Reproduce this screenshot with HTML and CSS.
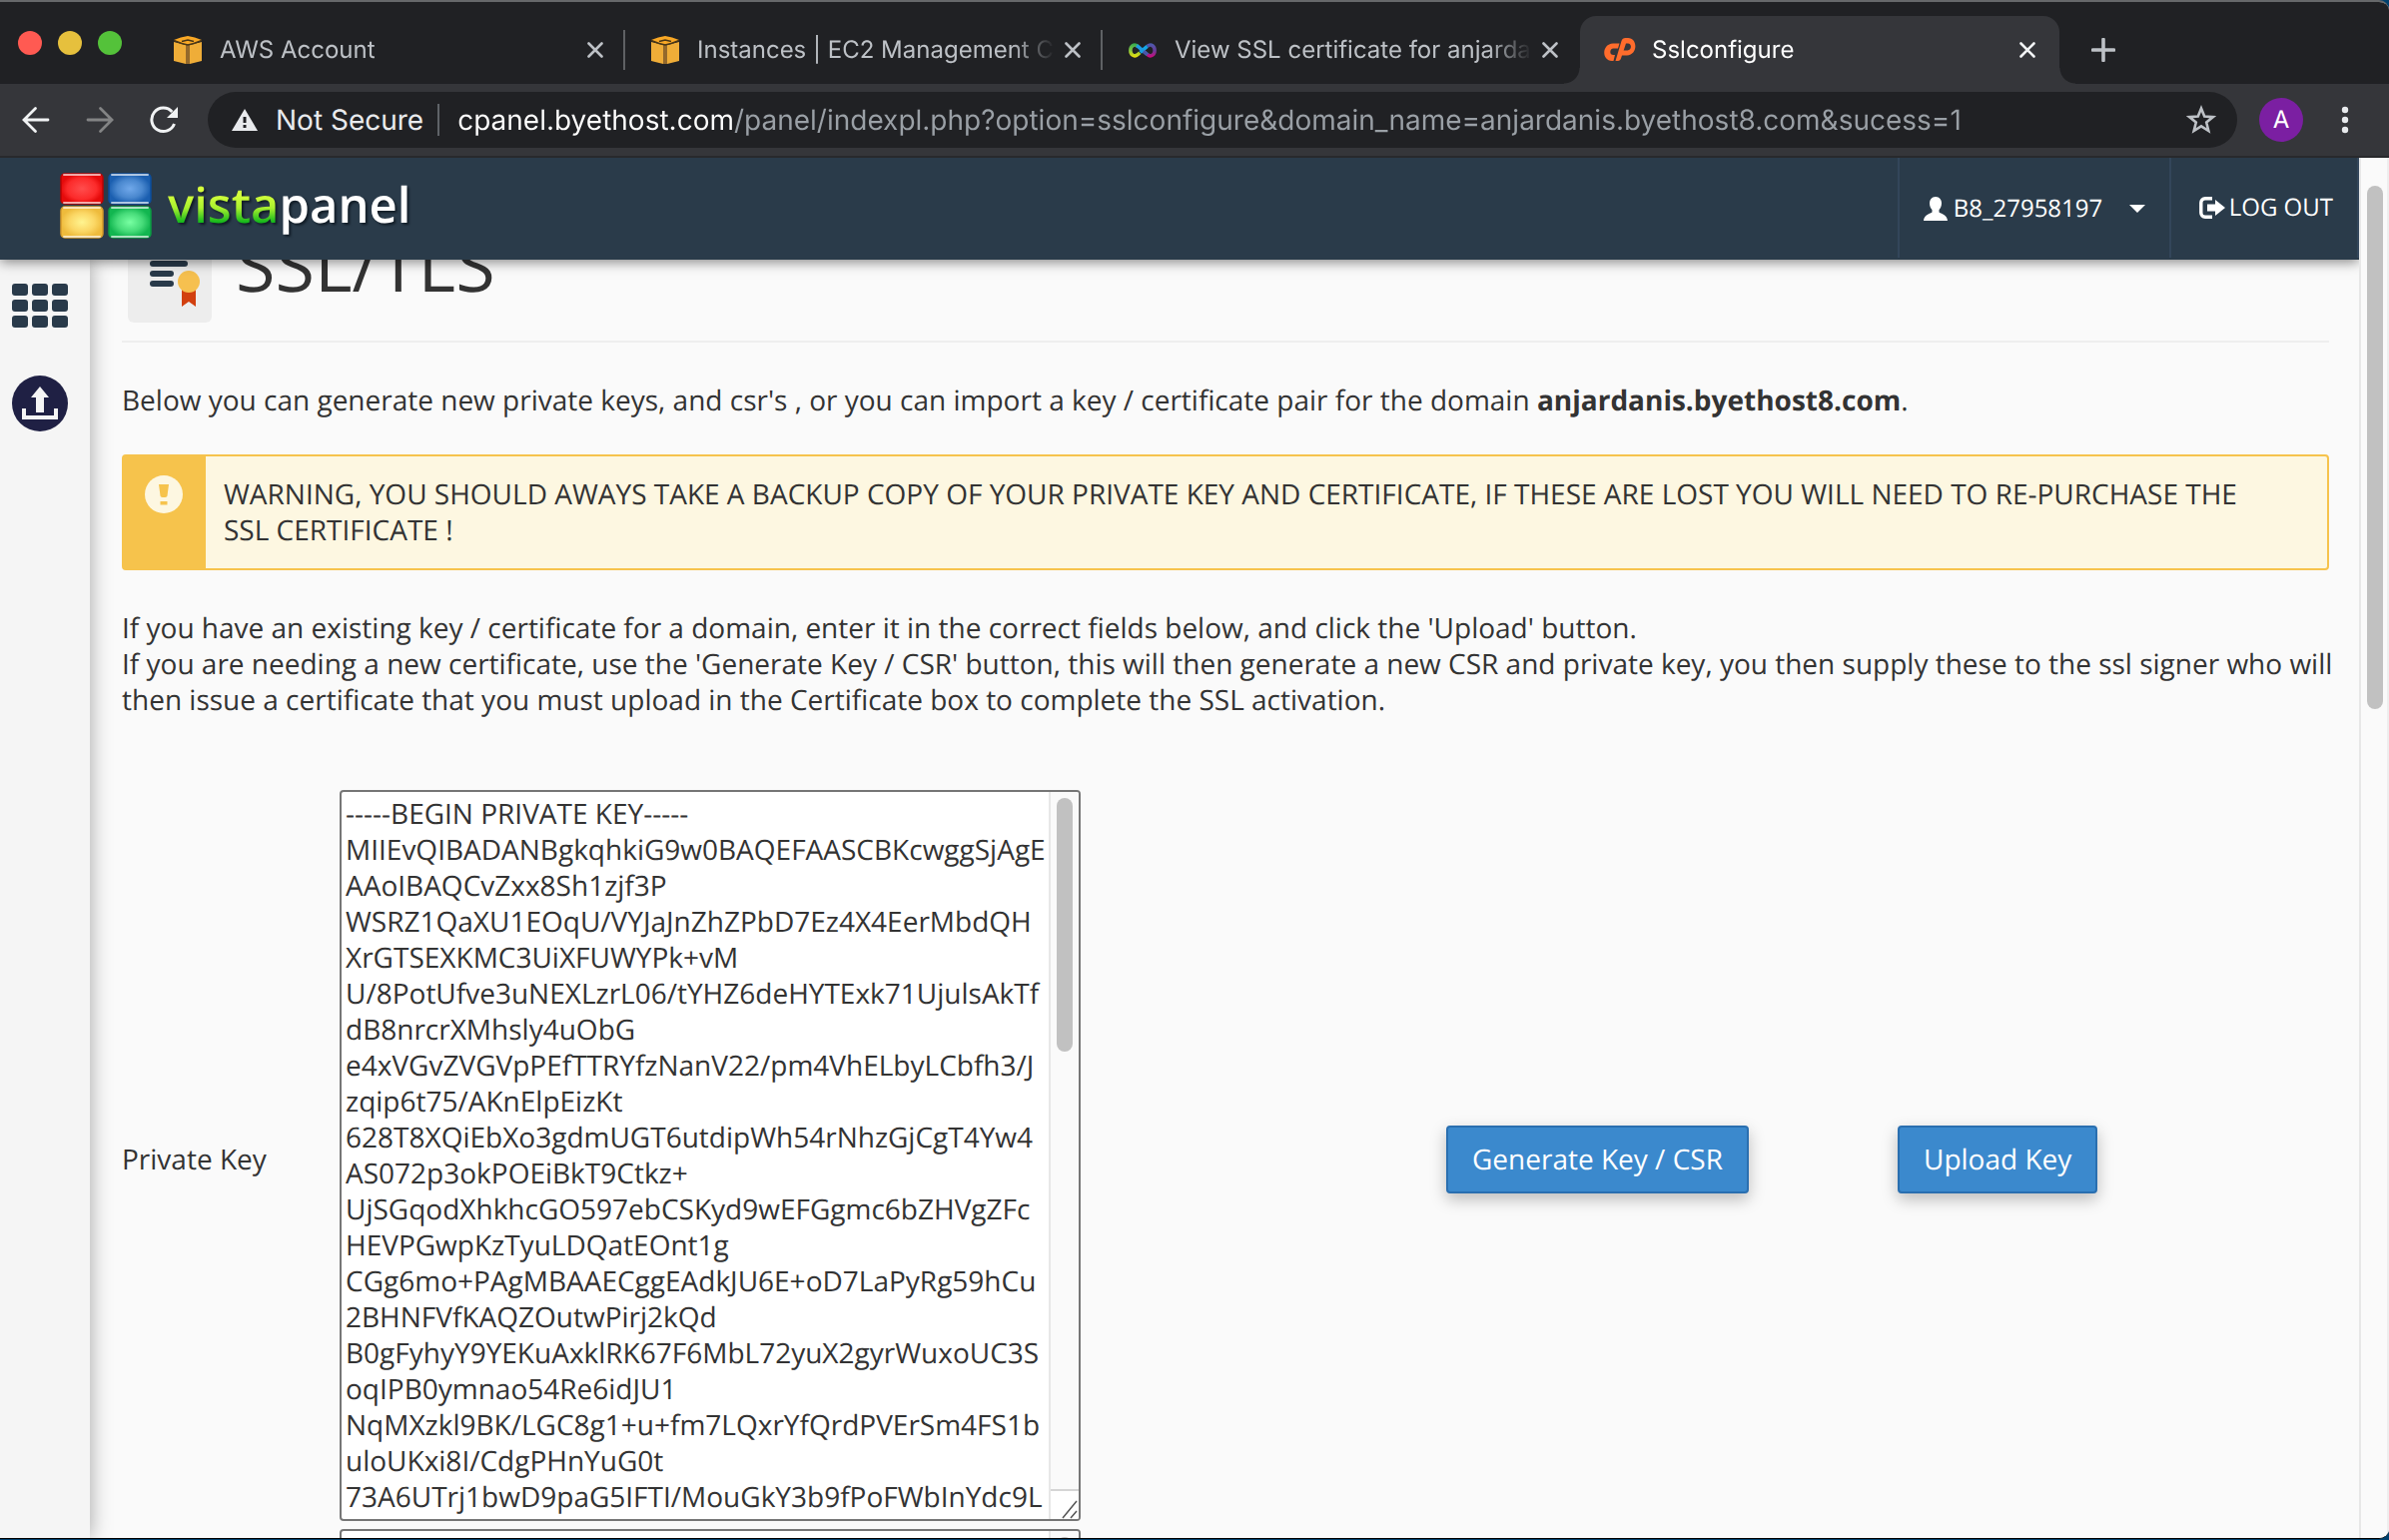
FILE: index.html
```html
<!DOCTYPE html>
<html lang="en">
<head>
<meta charset="utf-8">
<title>Sslconfigure</title>
<link rel="stylesheet" href="styles.css">
</head>
<body>
<svg class="defs" aria-hidden="true">
  <defs>
    <symbol id="aws" viewBox="0 0 28 28">
      <path d="M7 1.500 14 0l7 1.500L28 4l-7 3.500-7 1.500-7-1.500L0 4z" fill="#f9a825"/>
      <path d="M0 6l12 3v19L0 25zM28 6L16 9v19l12-3z" fill="#efad38"/>
      <path d="M12 9h4v19h-4z" fill="#94692b"/>
      <path d="M0 4.500l8 3 6 1.500 6-1.500 8-3M8 5.500l6-1.500 6 1.500" fill="none" stroke="#4a3717" stroke-width="1.500"/>
    </symbol>
    <symbol id="close" viewBox="0 0 16 16">
      <path d="M1.500 1.500l13 13M14.500 1.500l-13 13" stroke="currentColor" stroke-width="2.600" stroke-linecap="round"/>
    </symbol>
  </defs>
</svg>

<div class="tabstrip">
  <div class="lights"><span class="light red"></span><span class="light yellow"></span><span class="light green"></span></div>
  <div class="tab">
    <svg class="favicon"><use href="#aws"/></svg>
    <a class="tab-title" href="#">AWS Account</a>
    <button class="icon-btn" aria-label="Close tab"><svg class="x"><use href="#close"/></svg></button>
  </div>
  <div class="tab">
    <svg class="favicon"><use href="#aws"/></svg>
    <a class="tab-title" href="#">Instances | EC2 Management C</a>
    <button class="icon-btn" aria-label="Close tab"><svg class="x"><use href="#close"/></svg></button>
  </div>
  <div class="tab last">
    <svg class="favicon" viewBox="0 0 30 30" fill="none" stroke-width="3.800">
      <defs>
        <linearGradient id="loopA" gradientUnits="userSpaceOnUse" x1="0" y1="8" x2="0" y2="24"><stop offset="0" stop-color="#2fa84f"/><stop offset=".5" stop-color="#8cc63f"/><stop offset="1" stop-color="#ffe600"/></linearGradient>
        <linearGradient id="loopB" gradientUnits="userSpaceOnUse" x1="0" y1="8" x2="0" y2="24"><stop offset="0" stop-color="#4a5cb0"/><stop offset=".5" stop-color="#6b3a96"/><stop offset="1" stop-color="#e0007a"/></linearGradient>
      </defs>
      <path d="M10 11.200C5.500 7.500 2 11.500 2 15.500s3.500 8 8 4.300l2-1.800" stroke="url(#loopA)"/>
      <path d="M20 11.200c4.500-3.700 8 .3 8 4.300s-3.500 8-8 4.300" stroke="url(#loopB)"/>
      <path d="M12.500 17.500L20 11.200" stroke="#14a5e6"/>
      <path d="M8.500 10.400l1.500.8L20 19.800" stroke="#1e9be0"/>
      <path d="M16 16.400l4 3.400" stroke="#4a55a8"/>
    </svg>
    <a class="tab-title" href="#">View SSL certificate for anjarda</a>
    <button class="icon-btn" aria-label="Close tab"><svg class="x"><use href="#close"/></svg></button>
  </div>
  <div class="tab active">
    <svg class="favicon cp" viewBox="0 0 32 24" fill="#ff6c2c">
      <path d="M9 5.500h6.500l-1.500 5H9.500c-4 0-4.500 6.500 0 6.500h1.500L9.500 23H8C-3 22-2 6 9 5.500z"/>
      <path d="M11.500 23L17.500 3c.6-2 2-3 4-3H24c10 0 10 17-1 17.500h-5l1.500-5h4c4.500 0 4.500-7 .5-7h-2L17 20.500c-.5 1.500-1.500 2.500-3 2.500z"/>
    </svg>
    <a class="tab-title" href="#">Sslconfigure</a>
    <button class="icon-btn" aria-label="Close tab"><svg class="x"><use href="#close"/></svg></button>
  </div>
  <button class="icon-btn new-tab" aria-label="New tab"><svg viewBox="0 0 24 24"><path d="M12 1.500v21M1.500 12h21" stroke="#bdc1c6" stroke-width="3.600" stroke-linecap="round"/></svg></button>
</div>

<div class="toolbar">
  <button class="icon-btn nav-btn" aria-label="Back"><svg viewBox="0 0 28 28"><path d="M26 14H2.500M13.500 2.500L2 14l11.500 11.500" fill="none" stroke="#f1f3f4" stroke-width="2.800" stroke-linecap="round"/></svg></button>
  <button class="icon-btn nav-btn" aria-label="Forward"><svg viewBox="0 0 28 28"><path d="M2 14h23.500M14.500 2.500L26 14 14.500 25.500" fill="none" stroke="#838485" stroke-width="2.800" stroke-linecap="round"/></svg></button>
  <button class="icon-btn nav-btn" aria-label="Reload"><svg viewBox="0 0 28 28"><path d="M24.500 18A11.700 11.700 0 1 1 22.300 6" fill="none" stroke="#f1f3f4" stroke-width="3"/><path d="M28 1v11H17z" fill="#f1f3f4"/></svg></button>
  <div class="omnibox">
    <svg class="warn" viewBox="0 0 26 22"><path d="M13 0l13 22H0z" fill="#e8eaed"/><path d="M11.500 8h3v6h-3zM11.500 16h3v3h-3z" fill="#202124"/></svg>
    <label class="secure" for="url">Not Secure</label>
    <span class="rule"></span>
    <input id="url" class="url" type="text" value="cpanel.byethost.com/panel/indexpl.php?option=sslconfigure&amp;domain_name=anjardanis.byethost8.com&amp;sucess=1">
    <button class="icon-btn" aria-label="Bookmark"><svg class="star" viewBox="0 0 30 30"><path d="M15 3.500l3.200 8 8.600.6-6.600 5.500 2.100 8.400-7.300-4.600-7.300 4.600 2.100-8.400-6.600-5.500 8.600-.6z" fill="none" stroke="#bdc1c6" stroke-width="2.600"/></svg></button>
  </div>
  <button class="avatar">A</button>
  <button class="icon-btn" aria-label="Menu"><svg class="dots" viewBox="0 0 8 28" fill="#e8eaed"><circle cx="4" cy="4" r="3.200"/><circle cx="4" cy="14" r="3.200"/><circle cx="4" cy="24" r="3.200"/></svg></button>
</div>

<div class="viewport">
  <div class="page">
    <header class="topbar">
      <a class="brand" href="#">
        <svg class="logo" viewBox="0 0 92 68">
          <defs>
            <radialGradient id="r"><stop offset="0" stop-color="#ff4d4d"/><stop offset=".7" stop-color="#fc2b2b"/><stop offset="1" stop-color="#e50b0b"/></radialGradient>
            <radialGradient id="b"><stop offset="0" stop-color="#70a8ea"/><stop offset=".6" stop-color="#4a88cf"/><stop offset="1" stop-color="#1b5fb0"/></radialGradient>
            <radialGradient id="y"><stop offset="0" stop-color="#fff490"/><stop offset=".6" stop-color="#fbd765"/><stop offset="1" stop-color="#eebb3c"/></radialGradient>
            <radialGradient id="g"><stop offset="0" stop-color="#78ffa2"/><stop offset=".6" stop-color="#47dc7a"/><stop offset="1" stop-color="#12b650"/></radialGradient>
          </defs>
          <g stroke-width="1.500">
            <rect x="1" y="2" width="42" height="30" rx="4" fill="url(#r)" stroke="#b80505"/>
            <rect x="49" y="2" width="42" height="30" rx="4" fill="url(#b)" stroke="#0d4d9a"/>
            <rect x="1" y="35" width="42" height="31" rx="4" fill="url(#y)" stroke="#d39a2b"/>
            <rect x="49" y="35" width="42" height="31" rx="4" fill="url(#g)" stroke="#0c9a43"/>
          </g>
          <g stroke="#fff" stroke-opacity=".65" stroke-width="2" stroke-linecap="round">
            <path d="M4 3h36M52 3h36M4 31h36M52 31h36M4 36h36M52 36h36M4 65h36M52 65h36"/>
          </g>
        </svg>
        <span class="brand-name"><span class="vista">vista</span><span>panel</span></span>
      </a>
      <nav class="account">
        <button class="user">
          <svg class="user-ico" viewBox="0 0 24 24" fill="#fff"><path d="M12 0c4 0 6 3 6 6.500 0 3-1 5-2.500 6.500v2.500c3 2 8 2.500 8.500 8.500H0c.5-6 5.500-6.500 8.500-8.500V13C7 11.500 6 9.500 6 6.500 6 3 8 0 12 0z"/></svg>
          <span>B8_27958197</span>
          <svg class="caret" viewBox="0 0 16 8"><path d="M0 0h16L8 8z" fill="#fff"/></svg>
        </button>
        <a class="logout" href="#">
          <svg class="out-ico" viewBox="0 0 26 22"><path d="M13 1.800H6C3.500 1.800 1.800 3.500 1.800 6v10c0 2.500 1.700 4.200 4.200 4.200h7" fill="none" stroke="#fff" stroke-width="3.400"/><path d="M8 7.500h8V3l10 8-10 8v-4.500H8z" fill="#fff"/></svg>
          <span>LOG OUT</span>
        </a>
      </nav>
    </header>
    <div class="body">
      <aside class="sidebar">
        <a href="#" aria-label="Home"><svg class="grid-ico" viewBox="0 0 56 44" fill="#293a4a">
          <rect width="16" height="12" rx="3"/><rect x="20" width="16" height="12" rx="3"/><rect x="40" width="16" height="12" rx="3"/>
          <rect y="16" width="16" height="12" rx="3"/><rect x="20" y="16" width="16" height="12" rx="3"/><rect x="40" y="16" width="16" height="12" rx="3"/>
          <rect y="32" width="16" height="12" rx="3"/><rect x="20" y="32" width="16" height="12" rx="3"/><rect x="40" y="32" width="16" height="12" rx="3"/></svg></a>
        <a href="#" aria-label="Upload"><svg class="up-ico" viewBox="0 0 56 56"><circle cx="28" cy="28" r="28" fill="#1f2044"/><path d="M28 11l9 11h-5v15h-8V22h-5z" fill="#f5f5f5"/><path d="M12 33v9h32v-9" fill="none" stroke="#f5f5f5" stroke-width="4"/></svg></a>
      </aside>
      <main class="content">
        <div class="heading">
          <span class="cert"><svg viewBox="0 0 84 84">
            <g stroke="#293a4a" stroke-width="6" stroke-linecap="round"><path d="M25 15h32M25 25h32M25 35h18M25 45h18"/></g>
            <path d="M54 50h14v18l-7-5-7 5z" fill="#d2400f"/><circle cx="61" cy="43" r="11" fill="#f6c04f"/></svg></span>
          <h1>SSL/TLS</h1>
        </div>
        <p class="intro">Below you can generate new private keys, and csr's , or you can import a key / certificate pair for the domain <b>anjardanis.byethost8.com</b>.</p>
        <div class="alert">
          <span class="alert-ico"><svg viewBox="0 0 38 38"><circle cx="19" cy="19" r="19" fill="#fdf7e1"/><path d="M14 9h10l-1.500 11.500c-.4 2-6.600 2-7 0zM15.500 26h7v3.500h-7z" fill="#f6c34c"/></svg></span>
          <p>WARNING, YOU SHOULD AWAYS TAKE A BACKUP COPY OF YOUR PRIVATE KEY AND CERTIFICATE, IF THESE ARE LOST YOU WILL NEED TO RE-PURCHASE THE SSL CERTIFICATE !</p>
        </div>
        <p class="help">If you have an existing key / certificate for a domain, enter it in the correct fields below, and click the 'Upload' button.<br>If you are needing a new certificate, use the 'Generate Key / CSR' button, this will then generate a new CSR and private key, you then supply these to the ssl signer who will then issue a certificate that you must upload in the Certificate box to complete the SSL activation.</p>
        <form class="keys">
          <label for="key">Private Key</label>
          <div class="field">
            <textarea id="key" spellcheck="false" wrap="off">-----BEGIN PRIVATE KEY-----
MIIEvQIBADANBgkqhkiG9w0BAQEFAASCBKcwggSjAgE
AAoIBAQCvZxx8Sh1zjf3P
WSRZ1QaXU1EOqU/VYJaJnZhZPbD7Ez4X4EerMbdQH
XrGTSEXKMC3UiXFUWYPk+vM
U/8PotUfve3uNEXLzrL06/tYHZ6deHYTExk71UjulsAkTf
dB8nrcrXMhsly4uObG
e4xVGvZVGVpPEfTTRYfzNanV22/pm4VhELbyLCbfh3/J
zqip6t75/AKnElpEizKt
628T8XQiEbXo3gdmUGT6utdipWh54rNhzGjCgT4Yw4
AS072p3okPOEiBkT9Ctkz+
UjSGqodXhkhcGO597ebCSKyd9wEFGgmc6bZHVgZFc
HEVPGwpKzTyuLDQatEOnt1g
CGg6mo+PAgMBAAECggEAdkJU6E+oD7LaPyRg59hCu
2BHNFVfKAQZOutwPirj2kQd
B0gFyhyY9YEKuAxklRK67F6MbL72yuX2gyrWuxoUC3S
oqIPB0ymnao54Re6idJU1
NqMXzkl9BK/LGC8g1+u+fm7LQxrYfQrdPVErSm4FS1b
uloUKxi8I/CdgPHnYuG0t
73A6UTrj1bwD9paG5IFTI/MouGkY3b9fPoFWbInYdc9L</textarea>
            <div class="track"><span class="thumb"></span><svg class="grip" viewBox="0 0 28 28"><path d="M12 27L26 10M20 27l6-7" stroke="#555" stroke-width="1.500"/></svg></div>
          </div>
          <div><button class="btn" type="button">Generate Key / CSR</button></div>
          <div><button class="btn" type="button">Upload Key</button></div>
          <span></span>
          <div class="field">
            <textarea aria-label="CSR" spellcheck="false"></textarea>
            <div class="track"><span class="thumb"></span></div>
          </div>
        </form>
      </main>
    </div>
  </div>
  <div class="scrollbar"><span class="thumb"></span></div>
</div>
</body>
</html>
```
FILE: styles.css
```css
* { box-sizing: border-box; }
html { height: 100%; background: #00406c; text-rendering: geometricPrecision; }
body {
  margin: 0;
  height: calc(100vh - 1px);
  display: flex;
  flex-direction: column;
  overflow: hidden;
  border-top: 2px solid #66686a;
  border-bottom: 1px solid #000;
  border-radius: 0 10px 10px 0;
  background: #fafafa;
  color: #333;
  font: 28px/36px "Open Sans", sans-serif;
}
a { color: inherit; text-decoration: none; }
button, input, textarea { text-rendering: inherit; }
button { font: inherit; border: 0; cursor: pointer; }
svg { display: block; }
.defs { position: absolute; width: 0; height: 0; }
.icon-btn { padding: 0; background: none; color: inherit; }

/* browser tabs */
.tabstrip {
  flex: none;
  height: 82px;
  display: flex;
  align-items: flex-end;
  background: #202124;
  color: #bdc1c6;
  font: 24px/32px Inter, sans-serif;
}
.lights { width: 148px; height: 82px; padding: 29px 0 0 18px; display: flex; gap: 16px; }
.light { width: 24px; height: 24px; border-radius: 50%; }
.red { background: #ff5a52; }
.yellow { background: #e6c03d; }
.green { background: #54c23a; }
.tab {
  flex: 0 1 478px;
  min-width: 0;
  height: 68px;
  padding: 0 22px 0 26px;
  display: flex;
  align-items: center;
  gap: 18px;
  background: linear-gradient(#5f6164, #5f6164) right 14px / 2px 40px no-repeat;
}
.tab.last { background: none; }
.tab.active {
  position: relative;
  flex-basis: 480px;
  background: #35363a;
  color: #f1f3f4;
  border-radius: 16px 16px 0 0;
  padding: 0 24px;
  gap: 16px;
}
.tab.active::before, .tab.active::after {
  content: "";
  position: absolute;
  bottom: 0;
  width: 16px;
  height: 16px;
}
.tab.active::before { left: -16px; background: radial-gradient(circle at 0 0, transparent 15px, #35363a 16px); }
.tab.active::after { right: -16px; background: radial-gradient(circle at 100% 0, transparent 15px, #35363a 16px); }
.favicon { flex: none; width: 28px; height: 28px; }
.favicon.cp { width: 32px; height: 24px; }
.tab-title {
  flex: 1;
  min-width: 0;
  margin-right: -8px;
  overflow: hidden;
  white-space: nowrap;
  -webkit-mask-image: linear-gradient(90deg, #000 calc(100% - 44px), transparent);
  mask-image: linear-gradient(90deg, #000 calc(100% - 44px), transparent);
}
.active .tab-title { color: #fff; }
.x { width: 16px; height: 16px; }
.new-tab { margin: 0 0 22px 32px; }
.new-tab svg { width: 24px; height: 24px; }

/* browser toolbar */
.toolbar {
  flex: none;
  height: 74px;
  padding: 0 40px 0 22px;
  display: flex;
  align-items: center;
  background: #35363a;
  border-bottom: 2px solid #28292c;
  font: 28px/36px Inter, sans-serif;
}
.nav-btn { margin-right: 36px; }
.nav-btn svg { width: 28px; height: 28px; }
.omnibox {
  flex: 1;
  height: 56px;
  margin-right: 22px;
  padding: 0 21px 0 24px;
  display: flex;
  align-items: center;
  border-radius: 28px;
  background: #202124;
}
.nav-btn + .omnibox { margin-left: -6px; }
.warn { width: 26px; height: 22px; margin-right: 18px; }
.secure { color: #e8eaed; }
.rule { width: 2px; height: 32px; margin: 0 18px 0 14px; background: #5f6368; }
.url {
  flex: 1;
  min-width: 0;
  padding: 0;
  border: 0;
  outline: 0;
  font: inherit;
  background: linear-gradient(90deg, #fff 276px, #9aa0a6 276px);
  -webkit-background-clip: text;
  background-clip: text;
  color: transparent;
}
.star { width: 30px; height: 30px; }
.avatar {
  width: 44px;
  height: 44px;
  margin-right: 38px;
  padding: 0;
  border-radius: 50%;
  background: #7b1fa2;
  color: #fff;
  font-size: 24px;
}
.dots { width: 8px; height: 28px; }

/* page */
.viewport { flex: 1; min-height: 0; display: flex; }
.page { flex: 1; min-width: 0; display: flex; flex-direction: column; overflow: hidden; }
.topbar {
  flex: none;
  position: relative;
  z-index: 2;
  height: 102px;
  padding-left: 60px;
  display: flex;
  justify-content: space-between;
  background: #2a3b4a;
  box-shadow: 0 2px 12px rgba(0, 0, 0, .5);
  color: #fff;
  font-size: 24px;
}
.brand { display: flex; align-items: flex-start; gap: 16px; padding-top: 14px; }
.logo { width: 92px; height: 68px; }
.brand-name {
  display: flex;
  font-size: 49px;
  line-height: 66px;
  font-weight: 600;
  filter: drop-shadow(2px 2px 1px #111c26);
}
.vista {
  background: linear-gradient(#d4ff3c 35%, #a8f02e 55%, #16b81c 76%);
  -webkit-background-clip: text;
  background-clip: text;
  color: transparent;
}
.account { display: flex; height: 100px; }
.user, .logout {
  display: flex;
  align-items: center;
  background: none;
  color: #fff;
  border-left: 2px solid #33465a;
}
.user { width: 272px; padding: 2px 22px 0 24px; }
.user-ico { width: 24px; height: 24px; margin-right: 6px; }
.caret { width: 16px; height: 8px; margin-left: auto; margin-right: 2px; }
.logout { padding: 0 24px 0 28px; gap: 4px; border-right: 2px solid #33465a; }
.out-ico { width: 26px; height: 22px; }

.body { flex: 1; min-height: 0; display: flex; }
.sidebar {
  flex: none;
  width: 90px;
  padding: 24px 12px;
  display: flex;
  flex-direction: column;
  gap: 48px;
  background: #f5f5f5;
  box-shadow: 0 0 20px rgba(0, 0, 0, .35);
}
.grid-ico { width: 56px; height: 44px; }
.up-ico { width: 56px; height: 56px; }
.content { flex: 1; min-width: 0; padding: 0 30px 0 32px; }
p { margin: 0; }
.heading {
  display: flex;
  align-items: flex-start;
  gap: 24px;
  margin-top: -21px;
  padding: 0 0 18px 6px;
  border-bottom: 2px solid #eee;
}
.cert { width: 84px; height: 84px; border-radius: 6px; background: #ededed; }
h1 { margin: 0; font-size: 72px; line-height: 52px; font-weight: 400; }
.intro { margin: 40px 0 36px; }
.alert {
  display: flex;
  border: 2px solid #f6c34c;
  border-radius: 4px;
  background: #fdf7e1;
}
.alert-ico { flex: none; width: 82px; padding: 19px 0 0 21px; background: #f6c34c; }
.alert-ico svg { width: 38px; height: 38px; }
.alert p { padding: 20px 54px 20px 18px; }
.help { margin: 40px -10px 72px 0; }
.keys {
  display: grid;
  grid-template-columns: 218fr 1108fr 452fr 432fr;
  align-items: center;
}
.field {
  width: 742px;
  height: 732px;
  margin-bottom: 8px;
  display: flex;
  border: 2px solid #767676;
  border-radius: 4px;
  background: #fff;
  overflow: hidden;
}
textarea {
  flex: 1;
  min-width: 0;
  padding: 4px;
  border: 0;
  outline: 0;
  resize: none;
  overflow: hidden;
  background: none;
  color: #333;
  font: inherit;
}
.track {
  width: 30px;
  padding: 6px 6px 0;
  display: flex;
  flex-direction: column;
  justify-content: space-between;
  border-left: 2px solid #e7e7e7;
  background: #fafafa;
}
.track .thumb { width: 16px; height: 254px; }
.grip { width: 28px; height: 30px; margin-left: -6px; border-top: 2px solid #d5d5d5; background: #fff; }
.thumb { border-radius: 8px; background: #c1c1c1; }
.btn {
  height: 68px;
  padding: 0 24px;
  border: 2px solid #2a6fb0;
  border-radius: 4px;
  background: #3b89cd;
  color: #fff;
  box-shadow: 0 6px 16px rgba(0, 0, 0, .25);
}
.scrollbar {
  flex: none;
  width: 30px;
  padding: 28px 6px 0;
  border-left: 2px solid #e7e7e7;
  border-right: 2px solid #eee;
  background: #fafafa;
}
.scrollbar .thumb { display: block; width: 16px; height: 524px; }
```
